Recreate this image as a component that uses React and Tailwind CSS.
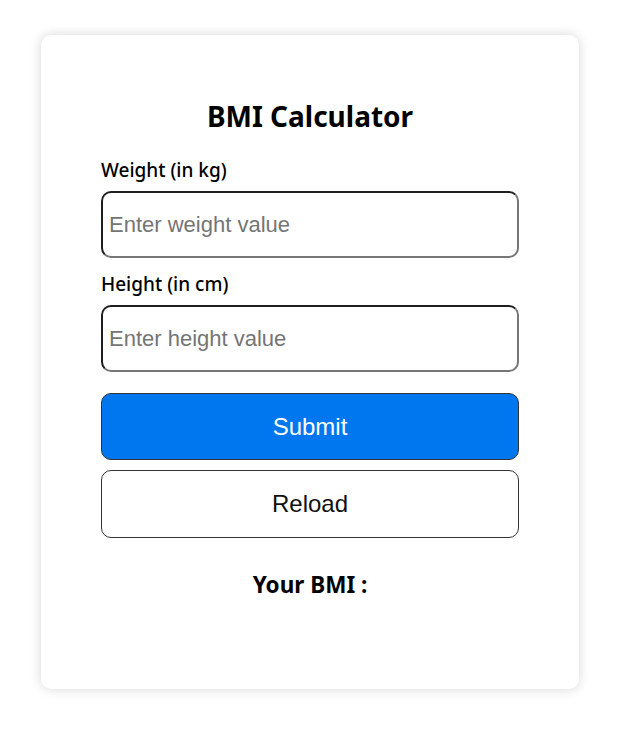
export default function App() {
  return (
    <div className="min-h-[741px] w-full bg-white pt-[35px]">
      <div className="ml-[41px] w-[538px] h-[654px] rounded-[10px] bg-white shadow-[0_0_12px_rgba(0,0,0,0.16)] px-[60px] pt-[60px] flex flex-col">
        <h1 className="text-center text-[28px] leading-[42px] font-bold text-black font-['Noto_Sans',sans-serif]">
          BMI Calculator
        </h1>

        <label className="mt-[21px] text-[19px] leading-[24px] font-medium text-black font-['Noto_Sans',sans-serif]">
          Weight (in kg)
        </label>
        <input
          type="text"
          placeholder="Enter weight value"
          className="mt-[9px] h-[67px] w-full rounded-[10px] border-2 border-t-[#1e1e1e] border-l-[#1e1e1e] border-b-[#767676] border-r-[#767676] px-[6px] text-[22px] font-['Liberation_Sans',Arial,sans-serif] placeholder:text-[#757575] outline-none"
        />

        <label className="mt-[14px] text-[19px] leading-[24px] font-medium text-black font-['Noto_Sans',sans-serif]">
          Height (in cm)
        </label>
        <input
          type="text"
          placeholder="Enter height value"
          className="mt-[9px] h-[67px] w-full rounded-[10px] border-2 border-t-[#1e1e1e] border-l-[#1e1e1e] border-b-[#767676] border-r-[#767676] px-[6px] text-[22px] font-['Liberation_Sans',Arial,sans-serif] placeholder:text-[#757575] outline-none"
        />

        <button className="mt-[21px] h-[67px] w-full rounded-[10px] border border-[#333] bg-[#0077ee] text-white text-[24px] font-['Liberation_Sans',Arial,sans-serif]">
          Submit
        </button>
        <button className="mt-[10px] h-[68px] w-full rounded-[10px] border border-[#333] bg-white text-[#111] text-[24px] font-['Liberation_Sans',Arial,sans-serif]">
          Reload
        </button>

        <p className="mt-[33px] text-center text-[22.5px] leading-[28px] font-bold text-black font-['Noto_Sans',sans-serif]">
          Your BMI :
        </p>
      </div>
    </div>
  );
}
